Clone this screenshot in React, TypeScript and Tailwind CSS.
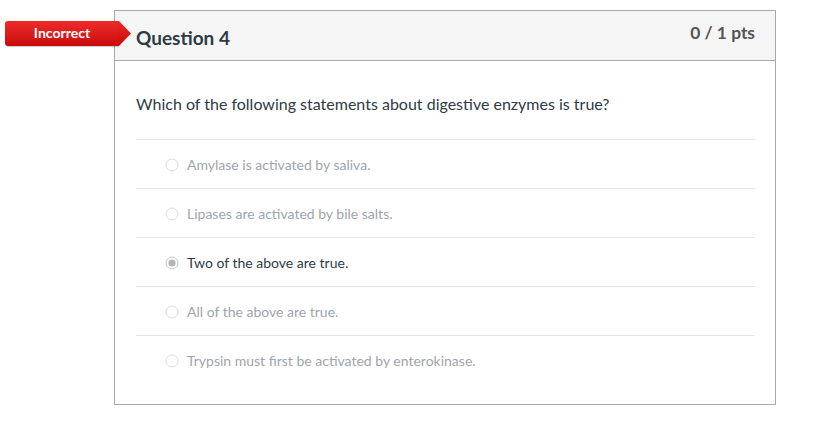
import React from "react";

const answers = [
  { text: "Amylase is activated by saliva.", selected: false },
  { text: "Lipases are activated by bile salts.", selected: false },
  { text: "Two of the above are true.", selected: true },
  { text: "All of the above are true.", selected: false },
  { text: "Trypsin must first be activated by enterokinase.", selected: false },
];

function Radio({ selected }: { selected: boolean }) {
  return (
    <svg width="14" height="14" viewBox="0 0 14 14" className="shrink-0">
      <circle cx="7" cy="7" r="6" fill="#fff" stroke={selected ? "#c8c8c8" : "#dcdcdc"} strokeWidth="1" />
      {selected && <circle cx="7" cy="7" r="3.6" fill="#b5b5b5" />}
    </svg>
  );
}

export default function App() {
  return (
    <div className="w-[819px] h-[425px] bg-white" style={{ fontFamily: "Lato, 'Liberation Sans', sans-serif" }}>
      <div className="pt-[10px] pl-[114px]">
        <div className="relative w-[662px] h-[395px] border border-[#a8a8a8]">
          <div className="absolute left-[-110px] top-[10px] h-[25px] w-[126px] flex">
            <div className="h-[25px] w-[114px] rounded-l-[3px] bg-gradient-to-b from-[#ee2a2a] to-[#c90a0a] flex items-center justify-center pb-px text-white text-[14px] font-bold leading-none shadow-[0_1px_1px_rgba(0,0,0,0.2)]">
              Incorrect
            </div>
            <svg width="13" height="25" viewBox="0 0 13 25" className="-ml-px">
              <defs>
                <linearGradient id="g" x1="0" y1="0" x2="0" y2="1">
                  <stop offset="0" stopColor="#ee2a2a" />
                  <stop offset="1" stopColor="#c90a0a" />
                </linearGradient>
              </defs>
              <path d="M0 0 L1 0 L13 12.5 L1 25 L0 25 Z" fill="url(#g)" />
            </svg>
          </div>
          <div className="h-[50px] bg-[#f5f5f5] border-b border-[#a8a8a8] flex justify-between pl-[21px] pr-[20px]">
            <div className="pt-[15px] text-[19px] font-bold text-[#2d3b45] leading-[24px]">Question 4</div>
            <div className="pt-[11px] text-[17.4px] font-bold text-[#555] leading-[22px]">0 / 1 pts</div>
          </div>
          <div className="pl-[21px] pr-[20px]">
            <div className="pt-[32px] pb-[24px] text-[16px] text-[#2d3b45] leading-[22px]">
              Which of the following statements about digestive enzymes is true?
            </div>
            {answers.map((a) => (
              <div key={a.text} className="h-[49px] border-t border-[#e6e6e6] flex items-center pt-[2px] pl-[29px] gap-[8px]">
                <Radio selected={a.selected} />
                <span className={`text-[14px] leading-[20px] ${a.selected ? "text-[#2d3b45]" : "text-[#9ea5ab]"}`}>{a.text}</span>
              </div>
            ))}
          </div>
        </div>
      </div>
    </div>
  );
}
